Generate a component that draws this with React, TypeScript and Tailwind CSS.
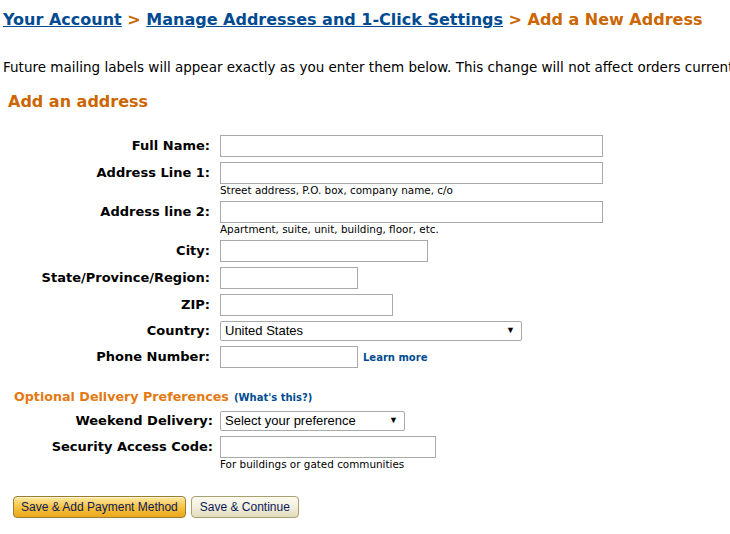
import React from 'react';

const verdana = "font-['DejaVu_Sans',Verdana,sans-serif]";
const arial = "font-['Liberation_Sans',Arial,sans-serif]";

type FieldProps = {
  label: string;
  width: string;
  hint?: string;
  labelWidth?: string;
  after?: React.ReactNode;
};

const TextField: React.FC<FieldProps> = ({ label, width, hint, labelWidth = 'w-[210px]', after }) => (
  <div className="flex items-start">
    <label className={`${labelWidth} shrink-0 text-right text-[13px] font-bold leading-[22px] text-black`}>
      {label}
    </label>
    <div className="ml-[10px] flex flex-col">
      <div className="flex items-center">
        <input type="text" className={`${width} h-[22px] border border-[#a9a9a9] bg-white outline-none`} />
        {after}
      </div>
      {hint && <div className="text-[10.4px] leading-[12px] text-black">{hint}</div>}
    </div>
  </div>
);

const SelectField: React.FC<FieldProps & { value: string }> = ({ label, width, value, labelWidth = 'w-[210px]' }) => (
  <div className="flex items-center">
    <label className={`${labelWidth} shrink-0 text-right text-[13px] font-bold leading-[20px] text-black`}>
      {label}
    </label>
    <div
      className={`${width} ml-[10px] flex h-[20px] items-center justify-between rounded-[2px] border border-[#a9a9a9] bg-white pl-[4px] pr-[6px] ${arial} text-[13px] text-black`}
    >
      <span>{value}</span>
      <span className="text-[9px]">▼</span>
    </div>
  </div>
);

export default function App() {
  return (
    <div className={`${verdana} h-[534px] w-[730px] overflow-hidden bg-white text-black`}>
      <div className="pl-[3px] pt-[9px] text-[16px] font-bold leading-[22px] whitespace-nowrap">
        <a className="text-[#004b91] underline">Your Account</a>
        <span className="text-[#cc6600]"> &gt; </span>
        <a className="text-[#004b91] underline">Manage Addresses and 1-Click Settings</a>
        <span className="text-[#cc6600]"> &gt; Add a New Address</span>
      </div>

      <p className="mt-[28px] pl-[3px] text-[13.5px] leading-[16px] whitespace-nowrap">
        Future mailing labels will appear exactly as you enter them below. This change will not affect orders currently in process.
      </p>

      <h2 className="mt-[17px] pl-[8px] text-[16px] font-bold leading-[20px] text-[#cc6600]">Add an address</h2>

      <div className="mt-[23px] flex flex-col gap-[5px]">
        <TextField label="Full Name:" width="w-[383px]" />
        <TextField label="Address Line 1:" width="w-[383px]" hint="Street address, P.O. box, company name, c/o" />
        <TextField label="Address line 2:" width="w-[383px]" hint="Apartment, suite, unit, building, floor, etc." />
        <TextField label="City:" width="w-[208px]" />
        <TextField label="State/Province/Region:" width="w-[138px]" />
        <TextField label="ZIP:" width="w-[173px]" />
        <SelectField label="Country:" width="w-[302px]" value="United States" />
        <TextField
          label="Phone Number:"
          width="w-[138px]"
          after={<a className="ml-[5px] text-[10px] font-bold text-[#004b91]">Learn more</a>}
        />
      </div>

      <div className="mt-[19px] pl-[14px] leading-[18px]">
        <span className="text-[12.7px] font-bold text-[#e47911]">Optional Delivery Preferences</span>{' '}
        <span className="text-[10px] font-bold text-[#004b91]">
          (<a>What's this?</a>)
        </span>
      </div>

      <div className="mt-[4px] flex flex-col gap-[5px]">
        <SelectField label="Weekend Delivery:" labelWidth="w-[213px]" width="w-[185px] !ml-[7px]" value="Select your preference" />
        <TextField
          label="Security Access Code:"
          labelWidth="w-[213px] -mr-[3px]"
          width="w-[216px]"
          hint="For buildings or gated communities"
        />
      </div>

      <div className={`mt-[26px] flex gap-[5px] pl-[13px] ${arial} text-[12px]`}>
        <button className="h-[22px] rounded-[4px] border border-[#9a7d2e] bg-gradient-to-b from-[#fde8a0] via-[#f8c33d] to-[#eaa81c] px-[7px] text-[#0b1a5e] shadow-[inset_0_1px_0_#fff5d0]">
          Save &amp; Add Payment Method
        </button>
        <button className="h-[22px] rounded-[4px] border border-[#a8a070] bg-gradient-to-b from-[#fbfaf0] via-[#f2efdc] to-[#e2dcbb] px-[8px] text-[#0b1a5e]">
          Save &amp; Continue
        </button>
      </div>
    </div>
  );
}
